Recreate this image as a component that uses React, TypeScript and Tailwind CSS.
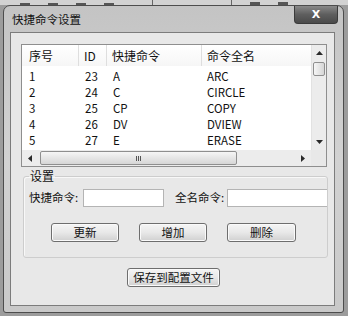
import React from 'react';

const rows = [
  { no: '1', id: '23', short: 'A', full: 'ARC' },
  { no: '2', id: '24', short: 'C', full: 'CIRCLE' },
  { no: '3', id: '25', short: 'CP', full: 'COPY' },
  { no: '4', id: '26', short: 'DV', full: 'DVIEW' },
  { no: '5', id: '27', short: 'E', full: 'ERASE' },
];

const cols = 'grid grid-cols-[57px_28px_95px_1fr]';

const Arrow = ({ dir }: { dir: 'up' | 'down' | 'left' | 'right' }) => {
  const pts = {
    up: '0,4 3.5,0 7,4',
    down: '0,0 7,0 3.5,4',
    left: '4,0 4,7 0,3.5',
    right: '0,0 0,7 4,3.5',
  }[dir];
  const vertical = dir === 'up' || dir === 'down';
  return (
    <svg width={vertical ? 7 : 4} height={vertical ? 4 : 7} viewBox={vertical ? '0 0 7 4' : '0 0 4 7'}>
      <polygon points={pts} fill="#2a2a2a" />
    </svg>
  );
};

const Button = ({ label, className = '' }: { label: string; className?: string }) => (
  <button
    className={`h-[19px] rounded-[3px] border border-[#6e6e6e] bg-linear-to-b from-[#f5f5f5] via-[#e8e8e8] to-[#d0d0d0] shadow-[inset_0_0_0_1px_#fafafa] text-[11.5px] leading-none text-[#111] ${className}`}
  >
    {label}
  </button>
);

const App: React.FC = () => {
  return (
    <div className="w-[348px] h-[316px] overflow-hidden bg-[#9c9c9c] font-['Noto_Sans_CJK_SC','Noto_Sans',sans-serif]">
      {/* toolbar of the app behind */}
      <div className="h-[5px] bg-[#d2d2d2] flex items-end gap-[18px] pl-[20px]">
        <div className="w-[10px] h-[2px] bg-[#555]" />
        <div className="w-[10px] h-[2px] bg-[#555]" />
        <div className="w-[10px] h-[2px] bg-[#555]" />
        <div className="w-[10px] h-[2px] bg-[#555]" />
        <div className="w-[1px] h-[5px] bg-[#666] ml-[20px]" />
        <div className="w-[1px] h-[5px] bg-[#666] ml-[60px]" />
        <div className="w-[10px] h-[3px] bg-[#555]" />
        <div className="w-[10px] h-[3px] bg-[#555]" />
      </div>

      {/* window */}
      <div className="ml-[3px] w-[341px] h-[308px] rounded-t-[7px] rounded-b-[3px] border border-[#4d4d4d] bg-linear-to-b from-[#c4c4c4] via-[#d2d2d2] to-[#c9c9c9] flex flex-col">
        <div className="h-[26px] flex items-start justify-between pl-[8px] pr-[5px]">
          <span className="pt-[5px] text-[11.5px] leading-[16px] text-[#111]">快捷命令设置</span>
          <div className="w-[44px] h-[18px] rounded-b-[4px] border border-t-0 border-[#3a3a3a] bg-linear-to-b from-[#8a8a8a] via-[#5e5e5e] to-[#4a4a4a] flex items-center justify-center">
            <span className="text-white text-[11px] font-bold leading-none font-['DejaVu_Sans',sans-serif]">X</span>
          </div>
        </div>

        {/* client area */}
        <div className="ml-[6px] w-[325px] h-[274px] border border-[#7c7c7c] bg-[#e8e8e8] flex flex-col text-[11.5px] text-[#111]">
          {/* list view */}
          <div className="ml-[10px] mt-[11px] w-[306px] h-[123px] border border-[#8e8e8e] bg-white flex flex-col">
            <div className="flex h-[105px]">
              <div className="w-[289px] overflow-hidden">
                <div className={`${cols} h-[21px] bg-linear-to-b from-white to-[#f6f6f6] text-[12px]`}>
                  <div className="pl-[7px] flex items-center border-r border-[#dedede]">序号</div>
                  <div className="pl-[5px] flex items-center border-r border-[#dedede]">ID</div>
                  <div className="pl-[5px] flex items-center border-r border-[#dedede]">快捷命令</div>
                  <div className="pl-[5px] flex items-center">命令全名</div>
                </div>
                <div className="pt-[2px]">
                  {rows.map((r) => (
                    <div key={r.no} className={`${cols} h-[16px] items-center leading-[16px]`}>
                      <div className="pl-[7px]">{r.no}</div>
                      <div className="pl-[6px]">{r.id}</div>
                      <div className="pl-[6px]">{r.short}</div>
                      <div className="pl-[5px]">{r.full}</div>
                    </div>
                  ))}
                </div>
              </div>
              {/* vertical scrollbar */}
              <div className="w-[15px] bg-[#ececec] border-l border-[#e2e2e2] flex flex-col">
                <div className="h-[16px] flex items-center justify-center">
                  <Arrow dir="up" />
                </div>
                <div className="mt-[1px] mx-[1px] h-[14px] rounded-[2px] border border-[#8f8f8f] bg-linear-to-r from-[#f6f6f6] to-[#d6d6d6]" />
                <div className="flex-1" />
                <div className="h-[16px] flex items-center justify-center">
                  <Arrow dir="down" />
                </div>
              </div>
            </div>
            {/* horizontal scrollbar */}
            <div className="flex h-[16px]">
              <div className="w-[289px] bg-[#ececec] flex items-center">
                <div className="w-[16px] flex justify-center">
                  <Arrow dir="left" />
                </div>
                <div className="ml-[2px] w-[197px] h-[14px] rounded-[2px] border border-[#8f8f8f] bg-linear-to-b from-[#f6f6f6] to-[#d6d6d6] flex items-center justify-center gap-[1px]">
                  <div className="w-[1px] h-[5px] bg-[#555]" />
                  <div className="w-[1px] h-[5px] bg-[#555]" />
                  <div className="w-[1px] h-[5px] bg-[#555]" />
                </div>
                <div className="flex-1" />
                <div className="w-[16px] flex justify-center">
                  <Arrow dir="right" />
                </div>
              </div>
              <div className="w-[15px] bg-[#e8e8e8]" />
            </div>
          </div>

          {/* settings group */}
          <fieldset className="ml-[12px] mt-[1px] w-[305px] rounded-[3px] border border-[#cdcdcd] shadow-[inset_1px_1px_0_#f8f8f8] pl-[5px] pb-[15px]">
            <legend className="px-[1px] leading-[16px] text-[12px]">设置</legend>
            <div className="mt-[5px] flex items-center h-[18px]">
              <span className="w-[54px] whitespace-nowrap">快捷命令:</span>
              <div className="w-[81px] h-[18px] border border-[#b4b4b4] bg-white" />
              <span className="ml-[11px] w-[52px] whitespace-nowrap">全名命令:</span>
              <div className="w-[100px] h-[18px] border border-[#b4b4b4] border-r-0 bg-white shrink-0" />
            </div>
            <div className="mt-[16px] flex ml-[22px] gap-[20px]">
              <Button label="更新" className="w-[68px]" />
              <Button label="增加" className="w-[68px]" />
              <Button label="删除" className="w-[69px]" />
            </div>
          </fieldset>

          <Button label="保存到配置文件" className="ml-[116px] mt-[10px] w-[93px]" />
        </div>
      </div>
    </div>
  );
};

export default App;
